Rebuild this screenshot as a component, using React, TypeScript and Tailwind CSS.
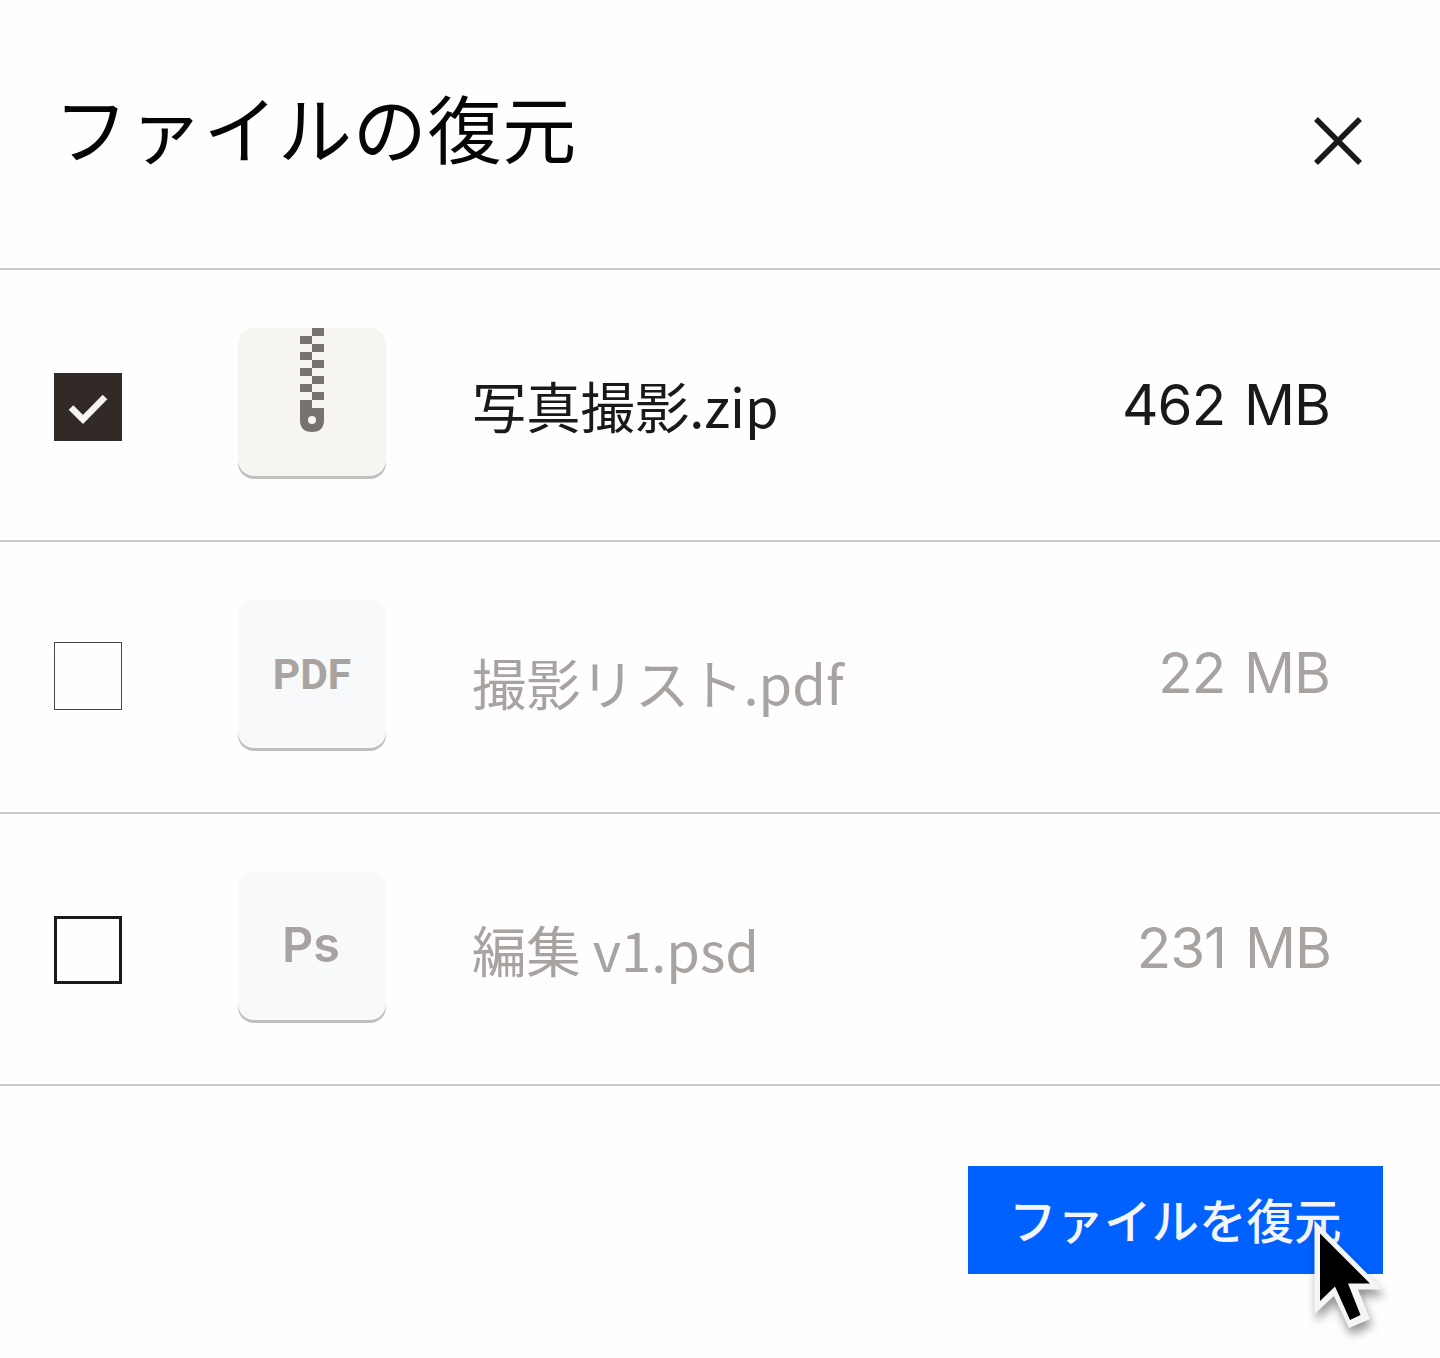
import React from 'react';
import clsx from 'clsx';

interface FileItem {
    name: string;
    size: string;
    kind: 'zip' | 'pdf' | 'psd';
    boxClass: string;
    nameClass: string;
    sizeClass: string;
    selected?: boolean;
}

const files: FileItem[] = [
    {
        name: '写真撮影.zip',
        size: '462 MB',
        kind: 'zip',
        boxClass: 'mt-[103px] bg-[#322a26]',
        nameClass: 'mt-[95px]',
        sizeClass: 'mt-[95px]',
        selected: true,
    },
    {
        name: '撮影リスト.pdf',
        size: '22 MB',
        kind: 'pdf',
        boxClass: 'mt-[100px] border border-[#4a4746]',
        nameClass: 'mt-[100px]',
        sizeClass: 'mt-[91px]',
    },
    {
        name: '編集 v1.psd',
        size: '231 MB',
        kind: 'psd',
        boxClass: 'mt-[102px] border-[3px] border-[#1a1818]',
        nameClass: 'mt-[95px]',
        sizeClass: 'mt-[94px] -mr-[1px]',
    },
];

const ZipperIcon = () => (
    <svg width="24" height="104" viewBox="0 0 24 104" fill="#76736f">
        {[0, 16, 32, 48, 64].map(y => <rect key={y} x="12" y={y} width="12" height="8" />)}
        {[8, 24, 40, 56].map(y => <rect key={y} x="0" y={y} width="12" height="8" />)}
        <path d="M0 72h12v8h12v12q0 12-12 12t-12-12z" />
        <circle cx="12" cy="92" r="4" fill="#f6f5f2" />
    </svg>
);

const FileTile = ({ kind }: { kind: FileItem['kind'] }) => (
    <div
        className={clsx(
            'ml-[116px] mt-[58px] flex h-[148px] w-[148px] shrink-0 justify-center rounded-2xl shadow-[0_3px_0_#bfbfc0]',
            kind === 'zip' ? 'bg-[#f6f5f2]' : 'bg-[#f7f9fb]'
        )}
    >
        {kind === 'zip' && <ZipperIcon />}
        {kind === 'pdf' && (
            <span className="mt-[50px] font-['Roboto',sans-serif] text-[42.5px] leading-[50px] font-bold text-[#a8a3a1]">PDF</span>
        )}
        {kind === 'psd' && (
            <span className="mt-[44px] -ml-[2px] font-['Inter',sans-serif] text-[48.5px] leading-[58px] font-semibold text-[#a8a3a1]">Ps</span>
        )}
    </div>
);

const FileRow = ({ file }: { file: FileItem }) => (
    <div
        className={clsx(
            'flex h-[272px] items-start border-b-2 border-[#cbcaca] pr-[110px] pl-[54px]',
            file.selected ? 'text-[#1a1818]' : 'text-[#a8a3a1]'
        )}
    >
        <div className={clsx('h-[68px] w-[68px] shrink-0', file.boxClass)}>
            {file.selected && (
                <svg width="68" height="68" viewBox="0 0 68 68" fill="none">
                    <path d="M17 34.5l12 12L51 24" stroke="#f7f5f2" strokeWidth="6.5" />
                </svg>
            )}
        </div>
        <FileTile kind={file.kind} />
        <span className={clsx("ml-[86px] font-['Noto_Sans_CJK_JP',sans-serif] text-[54.3px] leading-[80px] whitespace-nowrap", file.nameClass)}>
            {file.name}
        </span>
        <span className={clsx("ml-auto font-['Inter',sans-serif] text-[56.5px] leading-[80px] tracking-[-1px] [word-spacing:4px] whitespace-nowrap", file.sizeClass)}>
            {file.size}
        </span>
    </div>
);

const Cursor = () => (
    <svg
        className="absolute top-[50px] left-[330px] overflow-visible drop-shadow-[2px_7px_5px_rgba(0,0,0,0.4)]"
        width="100"
        height="130"
        viewBox="0 0 100 130"
    >
        <path d="M16.5 4.500v93.500l19.500-18 15 32 21-9-12-29.500h25z" fill="#f5f5f5" />
        <path d="M22 17.500v67.500l15-14.500 15 33.500 10.500-5-12.500-31.500h22z" fill="#000" />
    </svg>
);

const App: React.FC = () => {
    return (
        <div className="h-[1358px] w-[1440px] overflow-hidden bg-[#fefefe]">
            {/* Header */}
            <header className="flex h-[270px] items-start justify-between border-b-2 border-[#cbcaca] pr-[77px] pl-[54px]">
                <h1 className="mt-[72px] font-['Noto_Sans_CJK_JP',sans-serif] text-[74px] leading-[108px] tracking-[0.7px] text-[#050505]">
                    ファイルの復元
                </h1>
                <svg className="mt-[116px]" width="50" height="50" viewBox="0 0 50 50" fill="none">
                    <path d="M3 3l44 44M47 3L3 47" stroke="#1a1818" strokeWidth="5.5" />
                </svg>
            </header>

            {files.map(file => <FileRow key={file.name} file={file} />)}

            {/* Footer */}
            <footer className="flex justify-end pt-[80px] pr-[57px]">
                <button className="relative flex h-[108px] w-[415px] items-center bg-[#0061fe] pl-[41px]">
                    <span className="-mt-[3px] font-['Noto_Sans_CJK_JP',sans-serif] text-[47.5px] leading-[70px] font-medium whitespace-nowrap text-[#f3f5fb]">
                        ファイルを復元
                    </span>
                    <Cursor />
                </button>
            </footer>
        </div>
    );
};

export default App;
